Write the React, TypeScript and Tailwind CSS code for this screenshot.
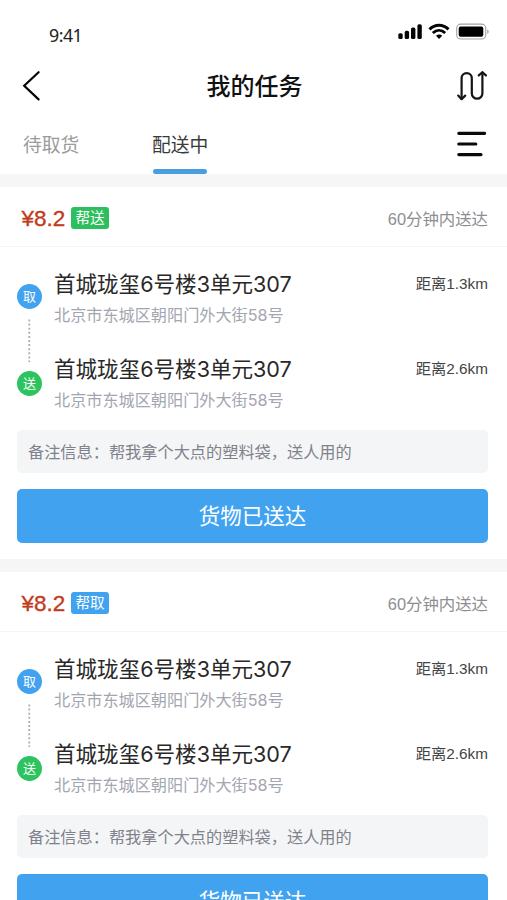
const tasks = [
  { id: 1, price: "¥8.2", tag: "帮送", tagClass: "bg-[#2dbf5d]" },
  { id: 2, price: "¥8.2", tag: "帮取", tagClass: "bg-[#41a3f0]" },
];

const stops = [
  { label: "取", color: "bg-[#41a3f0]", distance: "距离1.3km" },
  { label: "送", color: "bg-[#2dc45f]", distance: "距离2.6km" },
];

function StatusBar() {
  return (
    <div className="flex h-[60px] items-start justify-between pl-[49px] pr-[18px]">
      <span className="mt-[23px] font-['Noto_Sans'] text-[17.8px] leading-6 tracking-[-0.5px] text-[#222]">9:41</span>
      <svg className="mt-[22px]" width="91" height="20" viewBox="0 0 91 20" fill="none">
        {/* Signal */}
        <g fill="#050505">
          <rect x="0.3" y="11.2" width="4.4" height="5.8" rx="1.6" />
          <rect x="6.7" y="8.8" width="4.4" height="8.2" rx="1.6" />
          <rect x="13" y="5.6" width="4.4" height="11.4" rx="1.6" />
          <rect x="19.4" y="2.2" width="4.4" height="14.8" rx="1.6" />
        </g>
        {/* Wifi */}
        <path d="M31.5 7.4C37 1.8 45 1.8 50.5 7.4" stroke="#050505" strokeWidth="3" />
        <path d="M34.8 11C38.5 7.4 43.5 7.4 47.2 11" stroke="#050505" strokeWidth="2.8" />
        <path d="M38 13.8c1.8-1.7 4.4-1.7 6.2 0L41.1 17z" fill="#050505" />
        {/* Battery */}
        <rect x="58.7" y="2.1" width="29" height="14.9" rx="4" stroke="#a3a3a3" strokeWidth="1.1" />
        <rect x="60.7" y="4.5" width="24.6" height="10.3" rx="2" fill="#000" />
        <path d="M89.2 7.6c2 .6 2 3.8 0 4.4z" fill="#aaa" />
      </svg>
    </div>
  );
}

function Header() {
  return (
    <header className="bg-white">
      <StatusBar />
      <div className="flex h-[52px] items-center justify-between pl-[22px] pr-[20px]">
        <svg width="30" height="32" viewBox="0 0 30 32" fill="none" stroke="#050505" strokeWidth="2.2">
          <path d="M16.6 2.2 2.2 15.8 16.6 29.4" strokeLinecap="round" strokeLinejoin="miter" />
        </svg>
        <h1 className="pt-px text-[24px] font-medium leading-8 text-[#111]">我的任务</h1>
        <svg width="30" height="32" viewBox="0 0 30 32" fill="none" stroke="#151515" strokeWidth="2.2" strokeLinecap="round" strokeLinejoin="round">
          <path d="M4.6 29V8.2a5.1 5.1 0 0 1 10.2 0v15.2a5.3 5.3 0 0 0 10.6 0V2.6" />
          <path d="M1.2 25.6 4.6 29.2 8.2 25.6M21.8 5.4 25.4 2.2 28.9 5.4" />
        </svg>
      </div>
      <div className="flex h-[62px] items-start pl-[23px] pr-[20px] text-[18.8px] leading-7">
        <div className="mt-[20px] w-[129px] text-[#9b9b9b]">待取货</div>
        <div className="flex flex-col items-center pt-[20px] text-[#3a3a3a]">
          <span>配送中</span>
          <span className="mt-[9px] h-[5px] w-[54px] rounded-full bg-[#479fe2]" />
        </div>
        <svg className="ml-auto mt-[18px]" width="30" height="28" viewBox="0 0 30 28" stroke="#0a0a0a" strokeWidth="3.2" strokeLinecap="round">
          <path d="M1.8 3.3H27.6M1.8 14H18.8M1.8 24.6H24" />
        </svg>
      </div>
    </header>
  );
}

function TaskCard({ task }: { task: (typeof tasks)[number] }) {
  return (
    <section className="h-[372px] shrink-0 bg-white">
      <div className="flex h-[60px] items-center border-b border-[#f5f5f5] pl-[21px] pr-[19px] pt-[3px]">
        <span className="w-[44px] pl-[0.5px] pt-[2px] text-[22.5px] text-[#c13b1c] [-webkit-text-stroke:0.35px_#c13b1c]">{task.price}</span>
        <span className={`ml-[6px] flex h-[22px] w-[38px] items-center justify-center rounded-[3px] text-[14.6px] leading-none text-white ${task.tagClass}`}>
          {task.tag}
        </span>
        <span className="ml-auto pt-[2px] text-[16.4px] text-[#8d8e92]">60分钟内送达</span>
      </div>

      <div className="flex pl-[17px] pr-[19px] pt-[21px]">
        <div className="flex w-[37px] flex-col items-start pt-[16px]">
          <span className={`flex size-[25px] items-center justify-center rounded-full text-[13px] leading-none text-white ${stops[0].color}`}>
            {stops[0].label}
          </span>
          <svg className="ml-[11px] mt-[10px]" width="3" height="43" viewBox="0 0 3 43">
            <path d="M1.3 .5V43" stroke="#aaa" strokeWidth="1.7" strokeDasharray="2 2.1" />
          </svg>
          <span className={`mt-[9px] flex size-[25px] items-center justify-center rounded-full text-[13px] leading-none text-white ${stops[1].color}`}>
            {stops[1].label}
          </span>
        </div>
        <div className="flex-1">
          {stops.map((stop) => (
            <div key={stop.label} className="h-[85px]">
              <div className="flex h-[32px] items-center justify-between">
                <span className="font-[Inter,'Noto_Sans_CJK_SC',sans-serif] text-[21.55px] text-[#282828]">首城珑玺6号楼3单元307</span>
                <span className="text-[15.3px] text-[#444]">{stop.distance}</span>
              </div>
              <p className="font-[Inter,'Noto_Sans_CJK_SC',sans-serif] text-[16.15px] leading-[31px] text-[#a3a6b0]">北京市东城区朝阳门外大街58号</p>
            </div>
          ))}
        </div>
      </div>

      <div className="mx-[19px] -mt-[8px] ml-[17px] flex h-[43px] items-center rounded-[5px] bg-[#f4f5f7] pl-[11px] pt-px text-[16.2px] text-[#7f828b]">
        备注信息：帮我拿个大点的塑料袋，送人用的
      </div>
      <button className="ml-[17px] mt-[16px] flex h-[54px] w-[471px] items-center justify-center rounded-[5px] bg-[#41a3f0] pt-[3px] text-[21.5px] text-white">
        货物已送达
      </button>
    </section>
  );
}

export default function App() {
  return (
    <div className="flex h-[900px] w-[507px] flex-col overflow-hidden bg-[#f6f6f6] font-['Liberation_Sans','Noto_Sans_CJK_SC',sans-serif]">
      <Header />
      <main className="mt-[13px] flex flex-col gap-[13px]">
        {tasks.map((task) => (
          <TaskCard key={task.id} task={task} />
        ))}
      </main>
    </div>
  );
}
